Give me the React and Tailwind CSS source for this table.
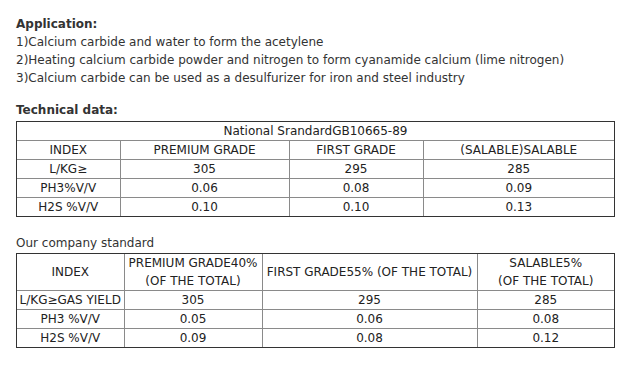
import React from 'react';

const national = [
  ['INDEX', 'PREMIUM GRADE', 'FIRST GRADE', '(SALABLE)SALABLE'],
  ['L/KG≥', '305', '295', '285'],
  ['PH3%V/V', '0.06', '0.08', '0.09'],
  ['H2S %V/V', '0.10', '0.10', '0.13'],
];

const company = [
  ['L/KG≥GAS YIELD', '305', '295', '285'],
  ['PH3 %V/V', '0.05', '0.06', '0.08'],
  ['H2S %V/V', '0.09', '0.08', '0.12'],
];

const cell = 'border border-[#8a8a8a] p-0 text-center font-normal leading-[18px]';

function App() {
  return (
    <div className="min-h-screen bg-white pl-4 pt-[15px] text-[12px] leading-[18px] text-[#333]" style={{ fontFamily: '"DejaVu Sans", Verdana, sans-serif' }}>
      {/* Application */}
      <p className="font-bold text-[#333]">Application:</p>
      <p>1)Calcium carbide and water to form the acetylene</p>
      <p>2)Heating calcium carbide powder and nitrogen to form cyanamide calcium (lime nitrogen)</p>
      <p>3)Calcium carbide can be used as a desulfurizer for iron and steel industry</p>

      {/* Technical data */}
      <p className="mt-[14px] font-bold">Technical data:</p>
      <div className="mt-[2px] w-[599px] border border-[#333]">
        <table className="w-full table-fixed border-collapse border-hidden text-[#222]">
          <colgroup>
            <col className="w-[103px]" />
            <col className="w-[169px]" />
            <col className="w-[134px]" />
            <col />
          </colgroup>
          <tbody>
            <tr>
              <td colSpan={4} className={cell}>National SrandardGB10665-89</td>
            </tr>
            {national.map((row, i) => (
              <tr key={i}>
                {row.map((v, j) => (
                  <td key={j} className={cell}>{v}</td>
                ))}
              </tr>
            ))}
          </tbody>
        </table>
      </div>

      {/* Company standard */}
      <p className="mt-[17px]">Our company standard</p>
      <div className="mt-px w-[599px] border border-[#333]">
        <table className="w-full table-fixed border-collapse border-hidden text-[#222]">
          <colgroup>
            <col className="w-[107px]" />
            <col className="w-[138px]" />
            <col className="w-[215px]" />
            <col />
          </colgroup>
          <tbody>
            <tr>
              <td className={cell}>INDEX</td>
              <td className={cell}>PREMIUM GRADE40%<br />(OF THE TOTAL)</td>
              <td className={cell}>FIRST GRADE55% (OF THE TOTAL)</td>
              <td className={cell}>SALABLE5%<br />(OF THE TOTAL)</td>
            </tr>
            {company.map((row, i) => (
              <tr key={i}>
                {row.map((v, j) => (
                  <td key={j} className={cell}>{v}</td>
                ))}
              </tr>
            ))}
          </tbody>
        </table>
      </div>
    </div>
  );
}

export default App;
